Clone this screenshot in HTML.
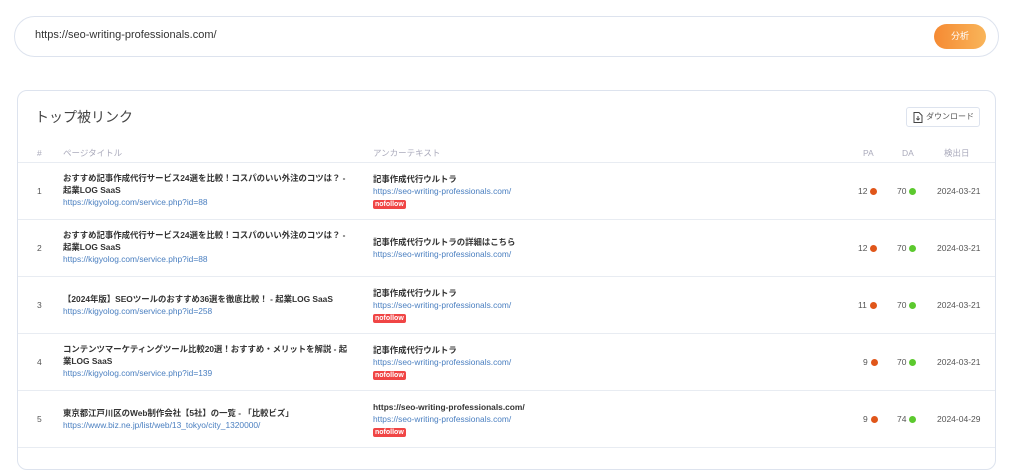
<!DOCTYPE html>
<html><head><meta charset="utf-8"><style>
*{box-sizing:border-box;margin:0;padding:0}
body{width:1024px;height:451px;overflow:hidden;background:#fff;font-family:"Liberation Sans","Noto Sans CJK JP",sans-serif;color:#333}
.search{position:absolute;left:14px;top:16px;width:985px;height:41px;border:1px solid #dde3ee;border-radius:21px;background:#fff}
.search .u{position:absolute;left:20px;top:12px;font-size:11px;color:#333}
.btn{position:absolute;left:919px;top:7px;width:52px;height:25px;border-radius:13px;background:linear-gradient(90deg,#f58a33,#f9b55a);color:#fff;font-size:9px;text-align:center;line-height:25px}
.card{position:absolute;left:17px;top:90px;width:979px;height:380px;border:1px solid #dde3ee;border-radius:10px;background:#fff}
.title{position:absolute;left:17px;top:16px;font-size:14px;color:#444}
.dl{position:absolute;left:888px;top:16px;width:74px;height:20px;border:1px solid #dde3ee;border-radius:3px;font-size:8px;color:#555;line-height:18px;padding-left:19px;white-space:nowrap}
.dl svg{position:absolute;left:6px;top:4px}
.hdr{position:absolute;top:56px;font-size:8.5px;color:#aab;line-height:12px}
.line{position:absolute;left:0;width:977px;height:1px;background:#e8ecf2}
.row{position:absolute;left:0;width:977px;height:57px}
.n{position:absolute;left:19px;font-size:8.5px;color:#555}
.c{position:absolute;font-size:8.4px;line-height:12px;white-space:nowrap}
.b{font-weight:bold;color:#333}
.l{color:#4a7fc0}
.nf{display:inline-block;background:#f04545;color:#fff;font-size:7px;line-height:9px;padding:0 2px;border-radius:2px;font-weight:bold}
.pa,.da{position:absolute;font-size:8.5px;color:#555}
.dot{display:inline-block;width:7px;height:7px;border-radius:50%;margin-left:3px;vertical-align:-1px}
.o{background:#e0561a}.g{background:#5cc92e}
.dt{position:absolute;left:919px;font-size:8.5px;color:#555}
</style></head><body>
<div class="search"><div class="u">https://seo-writing-professionals.com/</div><div class="btn">分析</div></div>
<div class="card">
<div class="title">トップ被リンク</div>
<div class="dl"><svg width="10" height="11" viewBox="0 0 10 11"><path d="M1 .5h5l3 3v7H1z" fill="none" stroke="#444"/><path d="M5 4v4M3.3 6.5L5 8l1.7-1.5" fill="none" stroke="#444"/></svg>ダウンロード</div>
<div class="hdr" style="left:19px">#</div>
<div class="hdr" style="left:45px">ページタイトル</div>
<div class="hdr" style="left:355px">アンカーテキスト</div>
<div class="hdr" style="left:845px">PA</div>
<div class="hdr" style="left:884px">DA</div>
<div class="hdr" style="left:926px">検出日</div>
<div class="line" style="top:71px"></div>

<div class="row" style="top:72px">
<div class="n" style="top:23px">1</div>
<div class="c" style="left:45px;top:9px"><div class="b">おすすめ記事作成代行サービス24選を比較！コスパのいい外注のコツは？ -<br>起業LOG SaaS</div><div class="l">https://kigyolog.com/service.php?id=88</div></div>
<div class="c" style="left:355px;top:10px"><div class="b">記事作成代行ウルトラ</div><div class="l">https://seo-writing-professionals.com/</div><span class="nf">nofollow</span></div>
<div class="pa" style="left:840px;top:23px">12<span class="dot o"></span></div>
<div class="da" style="left:879px;top:23px">70<span class="dot g"></span></div>
<div class="dt" style="top:23px">2024-03-21</div>
</div>
<div class="line" style="top:128px"></div>

<div class="row" style="top:129px">
<div class="n" style="top:23px">2</div>
<div class="c" style="left:45px;top:9px"><div class="b">おすすめ記事作成代行サービス24選を比較！コスパのいい外注のコツは？ -<br>起業LOG SaaS</div><div class="l">https://kigyolog.com/service.php?id=88</div></div>
<div class="c" style="left:355px;top:16px"><div class="b">記事作成代行ウルトラの詳細はこちら</div><div class="l">https://seo-writing-professionals.com/</div></div>
<div class="pa" style="left:840px;top:23px">12<span class="dot o"></span></div>
<div class="da" style="left:879px;top:23px">70<span class="dot g"></span></div>
<div class="dt" style="top:23px">2024-03-21</div>
</div>
<div class="line" style="top:185px"></div>

<div class="row" style="top:186px">
<div class="n" style="top:23px">3</div>
<div class="c" style="left:45px;top:16px"><div class="b">【2024年版】SEOツールのおすすめ36選を徹底比較！ - 起業LOG SaaS</div><div class="l">https://kigyolog.com/service.php?id=258</div></div>
<div class="c" style="left:355px;top:10px"><div class="b">記事作成代行ウルトラ</div><div class="l">https://seo-writing-professionals.com/</div><span class="nf">nofollow</span></div>
<div class="pa" style="left:840px;top:23px">11<span class="dot o"></span></div>
<div class="da" style="left:879px;top:23px">70<span class="dot g"></span></div>
<div class="dt" style="top:23px">2024-03-21</div>
</div>
<div class="line" style="top:242px"></div>

<div class="row" style="top:243px">
<div class="n" style="top:23px">4</div>
<div class="c" style="left:45px;top:9px"><div class="b">コンテンツマーケティングツール比較20選！おすすめ・メリットを解説 - 起<br>業LOG SaaS</div><div class="l">https://kigyolog.com/service.php?id=139</div></div>
<div class="c" style="left:355px;top:10px"><div class="b">記事作成代行ウルトラ</div><div class="l">https://seo-writing-professionals.com/</div><span class="nf">nofollow</span></div>
<div class="pa" style="left:845px;top:23px">9<span class="dot o"></span></div>
<div class="da" style="left:879px;top:23px">70<span class="dot g"></span></div>
<div class="dt" style="top:23px">2024-03-21</div>
</div>
<div class="line" style="top:299px"></div>

<div class="row" style="top:300px">
<div class="n" style="top:23px">5</div>
<div class="c" style="left:45px;top:16px"><div class="b">東京都江戸川区のWeb制作会社【5社】の一覧 - 「比較ビズ」</div><div class="l">https://www.biz.ne.jp/list/web/13_tokyo/city_1320000/</div></div>
<div class="c" style="left:355px;top:10px"><div class="b">https://seo-writing-professionals.com/</div><div class="l">https://seo-writing-professionals.com/</div><span class="nf">nofollow</span></div>
<div class="pa" style="left:845px;top:23px">9<span class="dot o"></span></div>
<div class="da" style="left:879px;top:23px">74<span class="dot g"></span></div>
<div class="dt" style="top:23px">2024-04-29</div>
</div>
<div class="line" style="top:356px"></div>
</div>
</body></html>
